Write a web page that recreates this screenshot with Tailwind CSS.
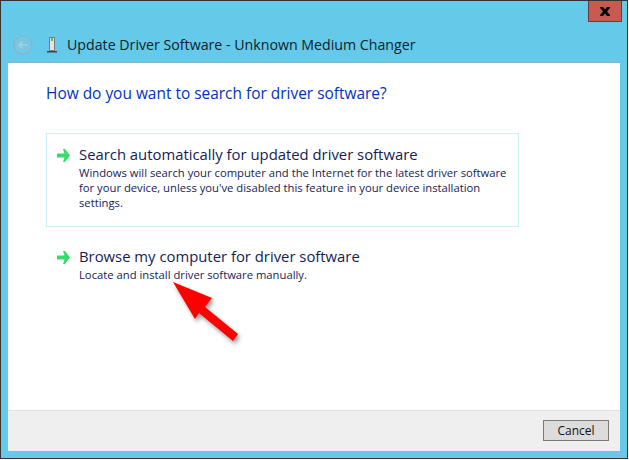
<!DOCTYPE html>
<html lang="en">
<head>
  <meta charset="UTF-8" />
  <title>Update Driver Software</title>
  <script src="https://cdn.jsdelivr.net/npm/@tailwindcss/browser@4"></script>
</head>
<body class="bg-white w-[629px] h-[460px] overflow-hidden relative font-['Open_Sans','Noto_Sans',sans-serif]">

  <div class="w-[628px] h-[459px] border border-[#333] bg-[#65c9ea] flex flex-col relative">
    <!-- close button -->
    <div class="absolute top-0 left-[587px] w-[34px] h-[21px] bg-[#c75b50] border border-[#6b3a3a] border-t-0 flex items-center justify-center">
      <svg width="10" height="9" viewBox="0 0 10 9"><path d="M0 0h3l2 2.500L7 0h3v1L7 4.500 10 8v1H7L5 6.500 3 9H0V8l3-3.500L0 1z" fill="#000"/></svg>
    </div>

    <!-- title bar -->
    <div class="h-[61px] flex items-end pb-[6px] pl-[12px] shrink-0">
      <svg width="20" height="20" viewBox="0 0 20 20" class="mb-[1px]">
        <circle cx="10" cy="10" r="9" fill="#74c8e3" stroke="#8ab2c4" stroke-width="1.200"/>
        <path d="M15 10H6M9.500 6.500L6 10l3.500 3.500" fill="none" stroke="#a6d0de" stroke-width="1.500"/>
      </svg>
      <svg width="10" height="16" viewBox="0 0 10 16" class="ml-[14px] mb-[3px]">
        <rect x="2.500" y="0.500" width="5" height="13" fill="#e4e4e0" stroke="#77807f"/>
        <rect x="4" y="1" width="2" height="3" fill="#4fc04f"/>
        <rect x="0" y="14" width="10" height="1.500" fill="#3c4448"/>
      </svg>
      <span class="ml-[10px] text-[14.2px] leading-[22px] text-[#0c1f2b]">Update Driver Software - Unknown Medium Changer</span>
    </div>

    <!-- content -->
    <div class="ml-[7px] w-[612px] h-[389px] bg-white flex flex-col border-t border-t-[#84b0c8] shrink-0">
      <div class="flex-1 pl-[38px] pt-[20px]">
        <h1 class="text-[15.45px] leading-[20px] text-[#0033bc]">How do you want to search for driver software?</h1>

        <div class="mt-[30px] w-[473px] h-[94px] border border-[#ccf0fb] pl-[10px] pt-[10px] flex">
          <svg width="13" height="13" viewBox="0 0 13 13" class="mt-[5px] shrink-0"><path d="M6 0h2l5 6.500-5 6.500H6l1.500-4.500H0v-4h7.500z" fill="#36dc6a"/></svg>
          <div class="ml-[9px]">
            <div class="text-[14.85px] leading-[20px] text-[#151c55]">Search automatically for updated driver software</div>
            <p class="mt-[1px] text-[11.25px] leading-[15px] text-[#151c55] w-[430px]">Windows will search your computer and the Internet for the latest driver software for your device, unless you've disabled this feature in your device installation settings.</p>
          </div>
        </div>

        <div class="mt-[10px] pl-[11px] pt-[9px] flex">
          <svg width="13" height="13" viewBox="0 0 13 13" class="mt-[5px] shrink-0"><path d="M6 0h2l5 6.500-5 6.500H6l1.500-4.500H0v-4h7.500z" fill="#36dc6a"/></svg>
          <div class="ml-[9px]">
            <div class="text-[14.85px] leading-[20px] text-[#151c55]">Browse my computer for driver software</div>
            <p class="mt-[1px] text-[11.25px] leading-[15px] text-[#151c55]">Locate and install driver software manually.</p>
          </div>
        </div>
      </div>

      <!-- footer -->
      <div class="h-[41px] bg-[#efefef] border-t border-t-[#dfdfdf] flex items-center justify-end pr-[11px] pb-[1px] shrink-0">
        <button class="w-[66px] h-[21px] bg-[#dcdcdc] border border-[#7a7a7a] text-[12px] leading-[17px] text-[#111]">Cancel</button>
      </div>
    </div>
  </div>

  <!-- red annotation arrow -->
  <svg class="absolute left-[165px] top-[275px] drop-shadow-[2px_3px_2px_rgba(0,0,0,0.4)]" width="85" height="75" viewBox="165 275 85 75">
    <path d="M173 282L212 298L205 307L238 334L233 341L199 313L195 319z" fill="#fe0000"/>
  </svg>
</body>
</html>
